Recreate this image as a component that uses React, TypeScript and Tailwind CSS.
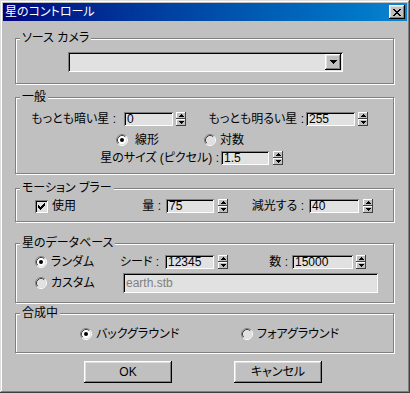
import React from "react";

const raised =
  "shadow-[inset_-1px_-1px_#000,inset_1px_1px_#fff,inset_-2px_-2px_#808080,inset_2px_2px_#dfdfdf]";
const sunken =
  "shadow-[inset_1px_1px_#808080,inset_-1px_-1px_#fff,inset_2px_2px_#000,inset_-2px_-2px_#dfdfdf]";

type Cls = { className?: string };

// little pixel triangles
const Up = () => (
  <svg width="5" height="3" viewBox="0 0 5 3">
    <rect x="2" y="0" width="1" height="1" fill="#000" />
    <rect x="1" y="1" width="3" height="1" fill="#000" />
    <rect x="0" y="2" width="5" height="1" fill="#000" />
  </svg>
);

const Down = () => (
  <svg width="5" height="3" viewBox="0 0 5 3">
    <rect x="0" y="0" width="5" height="1" fill="#000" />
    <rect x="1" y="1" width="3" height="1" fill="#000" />
    <rect x="2" y="2" width="1" height="1" fill="#000" />
  </svg>
);

const Spinner = ({ className = "" }: Cls) => (
  <div className={`flex h-[14px] w-[10px] shrink-0 flex-col ${className}`}>
    <div className="flex h-[7px] items-center justify-center bg-[#c0c0c0] shadow-[inset_-1px_-1px_#404040,inset_1px_1px_#fff]">
      <Up />
    </div>
    <div className="flex h-[7px] items-center justify-center bg-[#c0c0c0] shadow-[inset_-1px_-1px_#404040,inset_1px_1px_#fff]">
      <Down />
    </div>
  </div>
);

const Edit = ({ value, className = "" }: Cls & { value: string }) => (
  <div className={`h-[14px] shrink-0 bg-[#e1e1e1] px-[3px] leading-[14px] ${sunken} ${className}`}>{value}</div>
);

const Radio = ({ checked }: { checked?: boolean }) => (
  <svg width="12" height="12" viewBox="0 0 12 12" className="shrink-0">
    <circle cx="6" cy="6" r="5" fill={checked ? "#fff" : "#e1e1e1"} />
    <path d="M2.11 9.89A5.5 5.5 0 0 1 9.89 2.11" stroke="#808080" fill="none" />
    <path d="M9.89 2.11A5.5 5.5 0 0 1 2.11 9.89" stroke="#fff" fill="none" />
    <path d="M2.82 9.18A4.5 4.5 0 0 1 9.18 2.82" stroke="#404040" fill="none" />
    <path d="M9.18 2.82A4.5 4.5 0 0 1 2.82 9.18" stroke="#dfdfdf" fill="none" />
    {checked && <circle cx="6" cy="6" r="2" fill="#000" />}
  </svg>
);

const Group = ({ title, className = "", children }: Cls & { title: string; children?: React.ReactNode }) => (
  <div
    className={`ml-[12px] flex w-[379px] flex-col border border-[#808080] shadow-[inset_1px_1px_#fff,1px_1px_#fff] ${className}`}
  >
    <div className="-mt-[7px] -mb-[5px] ml-[4px] h-[12px] self-start bg-[#c0c0c0] px-[2px] leading-[12px]">{title}</div>
    {children}
  </div>
);

const Label = ({ text, className = "" }: Cls & { text: string }) => (
  <div className={`shrink-0 text-right leading-[14px] whitespace-nowrap ${className}`}>{text}</div>
);

export default function App() {
  return (
    <div
      className={`flex h-[393px] w-[410px] flex-col bg-[#c0c0c0] p-[3px] text-[12px] text-black font-['Liberation_Sans','Noto_Sans_CJK_JP',sans-serif] [font-feature-settings:'palt'] shadow-[inset_-1px_-1px_#404040,inset_1px_1px_#dfdfdf,inset_-2px_-2px_#808080,inset_2px_2px_#fff]`}
    >
      {/* title bar */}
      <div className="flex h-[18px] items-center bg-linear-to-r from-[#000080] to-[#1084d0] pl-[2px] pr-[2px]">
        <span className="leading-[18px] text-white">星のコントロール</span>
        <div className={`ml-auto flex h-[14px] w-[16px] items-center justify-center bg-[#c0c0c0] ${raised}`}>
          <svg width="8" height="7" viewBox="0 0 8 7">
            <g fill="#000">
              <rect x="0" y="0" width="2" height="1" />
              <rect x="6" y="0" width="2" height="1" />
              <rect x="1" y="1" width="2" height="1" />
              <rect x="5" y="1" width="2" height="1" />
              <rect x="2" y="2" width="4" height="1" />
              <rect x="3" y="3" width="2" height="1" />
              <rect x="2" y="4" width="4" height="1" />
              <rect x="1" y="5" width="2" height="1" />
              <rect x="5" y="5" width="2" height="1" />
              <rect x="0" y="6" width="2" height="1" />
              <rect x="6" y="6" width="2" height="1" />
            </g>
          </svg>
        </div>
      </div>

      <Group title="ソース カメラ" className="mt-[17px] h-[46px]">
        <div className={`ml-[52px] mt-[13px] flex h-[20px] w-[275px] justify-end bg-[#e1e1e1] p-[2px] ${sunken}`}>
          <div className={`flex h-[16px] w-[16px] items-center justify-center bg-[#c0c0c0] ${raised}`}>
            <svg width="7" height="4" viewBox="0 0 7 4">
              <rect x="0" y="0" width="7" height="1" fill="#000" />
              <rect x="1" y="1" width="5" height="1" fill="#000" />
              <rect x="2" y="2" width="3" height="1" fill="#000" />
              <rect x="3" y="3" width="1" height="1" fill="#000" />
            </svg>
          </div>
        </div>
      </Group>

      <Group title="一般" className="mt-[13px] h-[77px]">
        <div className="mt-[14px] flex h-[14px] items-center">
          <Label text="もっとも暗い星 :" className="w-[100px]" />
          <Edit value="0" className="ml-[8px] w-[49px]" />
          <Spinner className="ml-[3px]" />
          <Label text="もっとも明るい星 :" className="w-[118px]" />
          <Edit value="255" className="ml-[2px] w-[49px]" />
          <Spinner className="ml-[3px]" />
        </div>
        <div className="mt-[8px] flex h-[12px] items-center">
          <div className="ml-[100px] flex w-[88px] items-center gap-[7px]">
            <Radio checked />
            <span className="leading-[12px]">線形</span>
          </div>
          <div className="flex items-center gap-[4px]">
            <Radio />
            <span className="leading-[12px]">対数</span>
          </div>
        </div>
        <div className="mt-[5px] flex h-[14px] items-center">
          <Label text="星のサイズ (ピクセル) :" className="w-[203px]" />
          <Edit value="1.5" className="ml-[2px] w-[48px]" />
          <Spinner className="ml-[4px]" />
        </div>
      </Group>

      <Group title="モーション ブラー" className="mt-[14px] h-[34px]">
        <div className="mt-[10px] flex h-[14px] items-center">
          <div className="ml-[19px] flex w-[80px] items-center gap-[4px]">
            <div className={`flex h-[13px] w-[13px] items-center justify-center bg-[#e1e1e1] ${sunken}`}>
              <svg width="7" height="7" viewBox="0 0 7 7">
                <g fill="#000">
                  <rect x="6" y="0" width="1" height="3" />
                  <rect x="5" y="1" width="1" height="3" />
                  <rect x="4" y="2" width="1" height="3" />
                  <rect x="3" y="3" width="1" height="3" />
                  <rect x="2" y="4" width="1" height="3" />
                  <rect x="1" y="3" width="1" height="3" />
                  <rect x="0" y="2" width="1" height="3" />
                </g>
              </svg>
            </div>
            <span className="leading-[14px]">使用</span>
          </div>
          <Label text="量 :" className="w-[46px]" />
          <Edit value="75" className="ml-[5px] w-[48px]" />
          <Spinner className="ml-[4px]" />
          <Label text="減光する :" className="w-[76px]" />
          <Edit value="40" className="ml-[5px] w-[50px]" />
          <Spinner className="ml-[4px]" />
        </div>
      </Group>

      <Group title="星のデータベース" className="mt-[21px] h-[60px]">
        <div className="mt-[11px] flex h-[14px] items-center">
          <div className="ml-[19px] flex w-[80px] items-center gap-[4px]">
            <Radio checked />
            <span className="leading-[14px]">ランダム</span>
          </div>
          <Label text="シード :" className="w-[44px]" />
          <Edit value="12345" className="ml-[6px] w-[49px]" />
          <Spinner className="ml-[4px]" />
          <Label text="数 :" className="w-[60px]" />
          <Edit value="15000" className="ml-[4px] w-[61px]" />
          <Spinner className="ml-[3px]" />
        </div>
        <div className="mt-[4px] flex h-[20px] items-center">
          <div className="ml-[19px] flex w-[88px] items-center gap-[4px]">
            <Radio />
            <span className="leading-[14px]">カスタム</span>
          </div>
          <div className={`h-[20px] w-[255px] bg-[#e1e1e1] px-[3px] leading-[20px] text-[#808080] ${sunken}`}>
            earth.stb
          </div>
        </div>
      </Group>

      <Group title="合成中" className="mt-[10px] h-[40px]">
        <div className="mt-[14px] flex h-[12px] items-center">
          <div className="ml-[64px] flex w-[161px] items-center gap-[4px]">
            <Radio checked />
            <span className="leading-[12px]">バックグラウンド</span>
          </div>
          <div className="flex items-center gap-[4px]">
            <Radio />
            <span className="leading-[12px]">フォアグラウンド</span>
          </div>
        </div>
      </Group>

      <div className="mt-[8px] flex">
        <button className={`ml-[81px] h-[22px] w-[88px] bg-[#c0c0c0] ${raised}`}>OK</button>
        <button className={`ml-[62px] h-[22px] w-[88px] bg-[#c0c0c0] ${raised}`}>キャンセル</button>
      </div>
    </div>
  );
}
